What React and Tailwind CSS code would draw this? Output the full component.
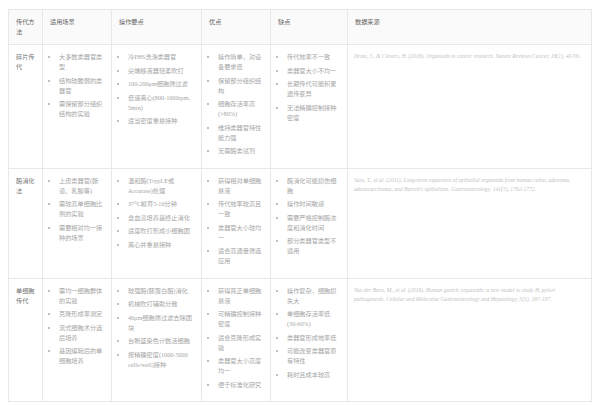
const rows = [
  {
    method: "碎片传代",
    scenes: ["大多数类器官类型", "结构较脆弱的类器官", "需保留部分组织结构的实验"],
    steps: [
      "冷PBS洗涤类器官",
      "尖端移液器轻柔吹打",
      "100-200μm细胞筛过滤",
      "低速离心(800-1000rpm, 5min)",
      "适当密度重悬接种",
    ],
    pros: ["操作简单，对设备要求低", "保留部分组织结构", "细胞存活率高(>80%)", "维持类器官特性能力强", "无需酶类试剂"],
    cons: ["传代效率不一致", "类器官大小不均一", "长期传代可能积累遗传变异", "无法精确控制接种密度"],
    source:
      "Drost, J., & Clevers, H. (2018). Organoids in cancer research. Nature Reviews Cancer, 18(1), 40-56.",
  },
  {
    method: "酶消化法",
    scenes: ["上皮类器官(肠道、乳腺等)", "需较高单细胞比例的实验", "需要相对均一接种的场景"],
    steps: [
      "温和酶(TrypLE或Accutase)处理",
      "37°C孵育5-10分钟",
      "含血清培养基终止消化",
      "适度吹打形成小细胞团",
      "离心并重悬接种",
    ],
    pros: ["获得相对单细胞悬液", "传代效率较高且一致", "类器官大小较均一", "适合高通量筛选应用"],
    cons: ["酶消化可能损伤细胞", "操作时间敏感", "需要严格控制酶浓度和消化时间", "部分类器官类型不适用"],
    source:
      "Sato, T., et al. (2011). Long-term expansion of epithelial organoids from human colon, adenoma, adenocarcinoma, and Barrett's epithelium. Gastroenterology, 141(5), 1762-1772.",
  },
  {
    method: "单细胞传代",
    scenes: ["需均一细胞群体的实验", "克隆形成率测定", "流式细胞术分选后培养", "基因编辑后的单细胞培养"],
    steps: [
      "较强酶(胰蛋白酶)消化",
      "机械吹打辅助分散",
      "40μm细胞筛过滤去除团块",
      "台盼蓝染色计数活细胞",
      "按精确密度(1000-5000 cells/well)接种",
    ],
    pros: ["获得真正单细胞悬液", "可精确控制接种密度", "适合克隆形成实验", "类器官大小高度均一", "便于标准化研究"],
    cons: [
      "操作复杂，细胞损失大",
      <>
        单细胞存活率低<span className="whitespace-nowrap">(30-60%)</span>
      </>,
      "类器官形成效率低",
      "可能改变类器官原有特性",
      "耗时且成本较高",
    ],
    source:
      "Van der Born, M., et al. (2018). Human gastric organoids: a new model to study H. pylori pathogenesis. Cellular and Molecular Gastroenterology and Hepatology, 5(1), 187-197.",
  },
];

const headers = ["传代方法", "适用场景", "操作要点", "优点", "缺点", "数据来源"];

// bullet list used in the middle columns
const Bullets = ({ items }) => (
  <ul className="list-disc pl-[8px] marker:text-[#aaa]">
    {items.map((item, i) => (
      <li key={i} className="mb-[3.5px]">
        {item}
      </li>
    ))}
  </ul>
);

const cell = "border border-[#e8e8e8] align-top";

export default function App() {
  return (
    <div className="w-[600px] h-[405px] bg-white pt-[9px] pl-[8px] font-['Liberation_Serif','Noto_Sans_CJK_SC',serif]">
      <table className="table-fixed border-collapse w-[583px] text-[6.2px] leading-[10px]">
        <colgroup>
          <col className="w-[34px]" />
          <col className="w-[69px]" />
          <col className="w-[90px]" />
          <col className="w-[69px]" />
          <col className="w-[77px]" />
          <col className="w-[244px]" />
        </colgroup>
        <thead>
          <tr className="bg-[#fafafa] h-[34px]">
            {headers.map((h) => (
              <th key={h} className={`${cell} pl-[7px] pr-[4px] py-[7px] text-left font-normal text-[#666]`}>
                {h}
              </th>
            ))}
          </tr>
        </thead>
        <tbody>
          {rows.map((row) => (
            <tr key={row.method}>
              <td className={`${cell} pl-[7px] pr-[4px] pt-[7px] pb-[10px] text-[#777]`}>{row.method}</td>
              <td className={`${cell} pl-[8px] pr-[5px] pt-[7px] pb-[8px] text-[#a6a6a6]`}>
                <Bullets items={row.scenes} />
              </td>
              <td className={`${cell} pl-[8px] pr-[5px] pt-[7px] pb-[8px] text-[#a6a6a6]`}>
                <Bullets items={row.steps} />
              </td>
              <td className={`${cell} pl-[8px] pr-[5px] pt-[7px] pb-[8px] text-[#a6a6a6]`}>
                <Bullets items={row.pros} />
              </td>
              <td className={`${cell} pl-[8px] pr-[5px] pt-[7px] pb-[8px] text-[#a6a6a6]`}>
                <Bullets items={row.cons} />
              </td>
              <td className={`${cell} px-[6px] pt-[7px] pb-[8px] italic text-[#c2c2c2] text-[5.6px] leading-[9.5px]`}>
                {row.source}
              </td>
            </tr>
          ))}
        </tbody>
      </table>
    </div>
  );
}
